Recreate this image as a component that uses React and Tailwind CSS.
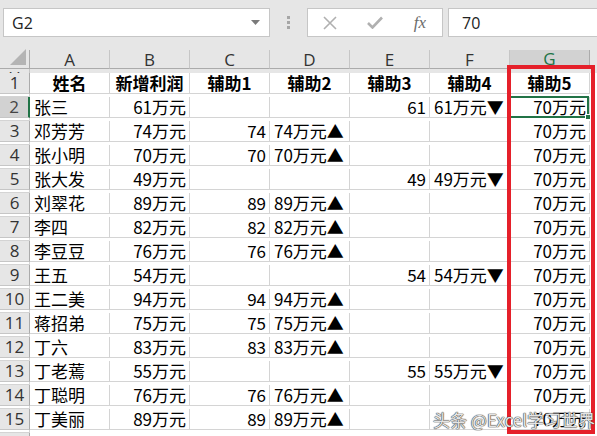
import React from 'react';

const rows = [
    ['张三', '61万元', '', '', '61', '61万元▼'],
    ['邓芳芳', '74万元', '74', '74万元▲', '', ''],
    ['张小明', '70万元', '70', '70万元▲', '', ''],
    ['张大发', '49万元', '', '', '49', '49万元▼'],
    ['刘翠花', '89万元', '89', '89万元▲', '', ''],
    ['李四', '82万元', '82', '82万元▲', '', ''],
    ['李豆豆', '76万元', '76', '76万元▲', '', ''],
    ['王五', '54万元', '', '', '54', '54万元▼'],
    ['王二美', '94万元', '94', '94万元▲', '', ''],
    ['蒋招弟', '75万元', '75', '75万元▲', '', ''],
    ['丁六', '83万元', '83', '83万元▲', '', ''],
    ['丁老蔫', '55万元', '', '', '55', '55万元▼'],
    ['丁聪明', '76万元', '76', '76万元▲', '', ''],
    ['丁美丽', '89万元', '89', '89万元▲', '', ''],
];

const headers = ['姓名', '新增利润', '辅助1', '辅助2', '辅助3', '辅助4', '辅助5'];
const letters = ['A', 'B', 'C', 'D', 'E', 'F', 'G', 'H'];

const gridCols = 'grid grid-cols-[30px_80px_80px_80px_80px_80px_80px_80px]';
const cellFont = { fontFamily: '"Noto Sans CJK SC", "Noto Sans", sans-serif' };
const uiFont = { fontFamily: '"Open Sans", "Noto Sans", sans-serif' };

// left aligned: A, D, F ; right aligned: B, C, E, G
const alignFor = (i) => ([0, 3, 5].includes(i) ? 'justify-start pl-[4px]' : 'justify-end pr-[3px]');

const App = () => {
    return (
        <div className="relative w-[597px] h-[436px] overflow-hidden bg-white">
            {/* formula bar */}
            <div className="h-[50px] bg-[#e6e6e6] flex items-start pt-[8px]" style={uiFont}>
                <div className="ml-[3px] w-[267px] h-[29px] bg-white border border-[#c6c6c6] flex items-center justify-between pl-[8px] pr-[9px]">
                    <span className="text-[16px] text-[#222]">G2</span>
                    <svg width="9" height="5" viewBox="0 0 9 5"><path d="M0 0h9L4.5 5z" fill="#7a7a7a" /></svg>
                </div>
                <div className="w-[37px] h-[29px] flex flex-col items-center justify-center gap-[2px]">
                    <span className="w-[3px] h-[3px] bg-[#a6a6a6]" />
                    <span className="w-[3px] h-[3px] bg-[#a6a6a6]" />
                    <span className="w-[3px] h-[3px] bg-[#a6a6a6]" />
                </div>
                <div className="w-[136px] h-[29px] bg-white border border-[#c6c6c6] flex items-center">
                    <div className="w-[44px] flex justify-center">
                        <svg width="14" height="14" viewBox="0 0 14 14"><path d="M1 1l12 12M13 1L1 13" stroke="#b0b0b0" strokeWidth="1.6" /></svg>
                    </div>
                    <div className="w-[46px] flex justify-center">
                        <svg width="16" height="13" viewBox="0 0 16 13"><path d="M1 7l4.5 4.5L15 1.5" stroke="#b0b0b0" strokeWidth="2.6" fill="none" /></svg>
                    </div>
                    <div className="w-[44px] flex justify-center">
                        <span className="italic text-[17px] text-[#6b6b6b]" style={{ fontFamily: '"Liberation Serif", serif' }}>fx</span>
                    </div>
                </div>
                <div className="ml-[5px] flex-1 h-[29px] bg-white border-y border-l border-[#c6c6c6] flex items-center pl-[13px]">
                    <span className="text-[16px] text-[#222]">70</span>
                </div>
            </div>

            {/* column headers */}
            <div className={`${gridCols} h-[23px] bg-[#e6e6e6]`} style={uiFont}>
                <div className="relative border-r border-b border-[#ababab]">
                    <svg className="absolute right-[3px] bottom-[3px]" width="16" height="16" viewBox="0 0 16 16"><path d="M16 0v16H0z" fill="#b4b4b4" /></svg>
                </div>
                {letters.map((l) => (
                    l === 'G' ? (
                        <div key={l} className="flex items-center justify-center bg-[#d2d2d2] border-r border-[#ababab] border-b-2 border-b-[#217346] text-[17px] leading-none text-[#217346]">{l}</div>
                    ) : (
                        <div key={l} className="flex items-center justify-center border-r border-b border-[#c6c6c6] border-b-[#ababab] text-[17px] leading-none text-[#333]">{l}</div>
                    )
                ))}
            </div>

            {/* row 1 */}
            <div className={`${gridCols} h-[24px]`} style={cellFont}>
                <div className="flex items-center justify-center bg-[#e6e6e6] border-r border-b border-[#c6c6c6] border-r-[#ababab] text-[17px] leading-none text-[#333]" style={uiFont}>1</div>
                {headers.map((h) => (
                    <div key={h} className="flex items-center justify-center border-r border-b border-[#d4d4d4] text-[17px] font-bold text-black leading-none">{h}</div>
                ))}
                <div className="border-r border-b border-[#d4d4d4]" />
            </div>

            {/* data rows */}
            {rows.map((r, idx) => {
                const n = idx + 2;
                const selected = n === 2;
                return (
                    <div key={n} className={`${gridCols} h-[24px]`} style={cellFont}>
                        <div
                            className={`flex items-center justify-center border-b border-[#c6c6c6] text-[17px] leading-none ${selected ? 'bg-[#d2d2d2] border-r-2 border-r-[#217346] text-[#444]' : 'bg-[#e6e6e6] border-r border-r-[#ababab] text-[#333]'}`}
                            style={uiFont}
                        >
                            {n}
                        </div>
                        {r.map((v, i) => (
                            <div key={i} className={`flex items-center ${alignFor(i)} border-r border-b border-[#d4d4d4] text-[17px] text-black leading-none whitespace-nowrap`}>
                                {v}
                            </div>
                        ))}
                        <div className="relative flex items-center justify-end pr-[3px] border-r border-b border-[#d4d4d4] text-[17px] text-black leading-none">
                            70万元
                            {selected && (
                                <>
                                    <div className="absolute -left-[1px] -top-[1px] right-[0px] -bottom-[1px] border-2 border-[#217346]" />
                                    <div className="absolute -right-[2px] -bottom-[3px] w-[6px] h-[6px] bg-[#217346] border border-white" />
                                </>
                            )}
                        </div>
                        <div className="border-r border-b border-[#d4d4d4]" />
                    </div>
                );
            })}
            <div className={`${gridCols} h-[24px]`}>
                <div className="bg-[#e6e6e6] border-r border-[#ababab]" />
            </div>

            {/* red highlight box */}
            <div className="absolute left-[507px] top-[65px] w-[88px] h-[369px] border-4 border-[#e5202a]" />

            {/* watermark */}
            <div
                className="absolute left-[433px] top-[407px] text-[17px] text-[#e4e4e4] whitespace-nowrap [text-shadow:0_0_1px_#444,0_0_1px_#444,0_0_1px_#444]"
                style={{ fontFamily: '"Noto Sans CJK SC", "Noto Sans", sans-serif' }}
            >
                头条 @Excel学习世界
            </div>
        </div>
    );
};

export default App;
